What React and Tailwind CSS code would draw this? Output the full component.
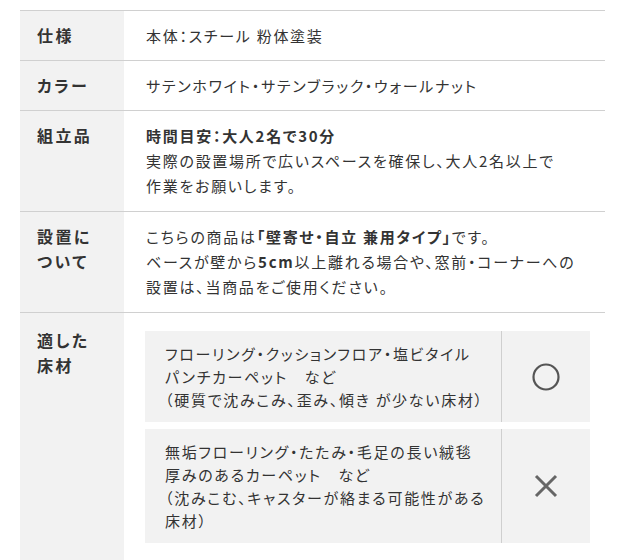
import React from "react";

function Row({ label, children, tall }) {
	const pad = tall ? "pt-3 pb-[13px]" : "py-3";
	return (
		<div className="flex border-t border-[#d0d0d0]">
			<div className={`w-[104px] shrink-0 bg-[#f2f2f2] pl-[17px] ${pad} text-[16px] font-bold tracking-[0.15em] leading-[25px]`}>
				{label}
			</div>
			<div className={`flex-1 pl-[22px] pr-4 ${pad} leading-[25px]`}>{children}</div>
		</div>
	);
}

function Circle() {
	return (
		<svg width="28" height="28" viewBox="0 0 28 28">
			<circle cx="14" cy="14" r="12.5" fill="none" stroke="#555" strokeWidth="2.2" />
		</svg>
	);
}

function Cross() {
	return (
		<svg width="24" height="24" viewBox="0 0 24 24">
			<path d="M2 2 L22 22 M22 2 L2 22" stroke="#666" strokeWidth="3" />
		</svg>
	);
}

function FloorBox({ children, mark }) {
	return (
		<div className="flex bg-[#f2f2f2]">
			<div className="flex-1 pl-5 pr-3 py-[11px] leading-[23px]">{children}</div>
			<div className="w-[89px] shrink-0 border-l border-[#cfcfcf] flex items-center justify-center">
				{mark}
			</div>
		</div>
	);
}

export default function App() {
	return (
		<div className="bg-white px-5 pt-[10px] h-[560px] overflow-hidden text-[15px] text-[#333] tracking-[0.115em] [font-feature-settings:'palt'] font-['Noto_Sans_CJK_JP',sans-serif]">
			<Row label="仕様">本体：スチール 粉体塗装</Row>
			<Row label="カラー">サテンホワイト・サテンブラック・ウォールナット</Row>
			<Row label="組立品" tall>
				<p className="font-bold">時間目安：大人2名で30分</p>
				<p>実際の設置場所で広いスペースを確保し、大人2名以上で</p>
				<p>作業をお願いします。</p>
			</Row>
			<Row label={<>設置に<br />ついて</>} tall>
				<p>
					こちらの商品は<span className="font-bold">「壁寄せ・自立 兼用タイプ」</span>です。
				</p>
				<p>
					ベースが壁から<span className="font-bold">5cm</span>以上離れる場合や、窓前・コーナーへの
				</p>
				<p>設置は、当商品をご使用ください。</p>
			</Row>
			<div className="flex border-t border-[#d0d0d0]">
				<div className="w-[104px] shrink-0 bg-[#f2f2f2] pl-[17px] pt-[15px] text-[16px] font-bold tracking-[0.15em] leading-[25px]">
					適した<br />床材
				</div>
				<div className="flex-1 pl-[21px] pr-[15px] pt-[18px] pb-6 flex flex-col gap-[7px]">
					<FloorBox mark={<Circle />}>
						フローリング・クッションフロア・塩ビタイル<br />
						パンチカーペット　など<br />
						（硬質で沈みこみ、歪み、傾き が少ない床材）
					</FloorBox>
					<FloorBox mark={<Cross />}>
						無垢フローリング・たたみ・毛足の長い絨毯<br />
						厚みのあるカーペット　など<br />
						（沈みこむ、キャスターが絡まる可能性がある<br />
						床材）
					</FloorBox>
				</div>
			</div>
		</div>
	);
}
